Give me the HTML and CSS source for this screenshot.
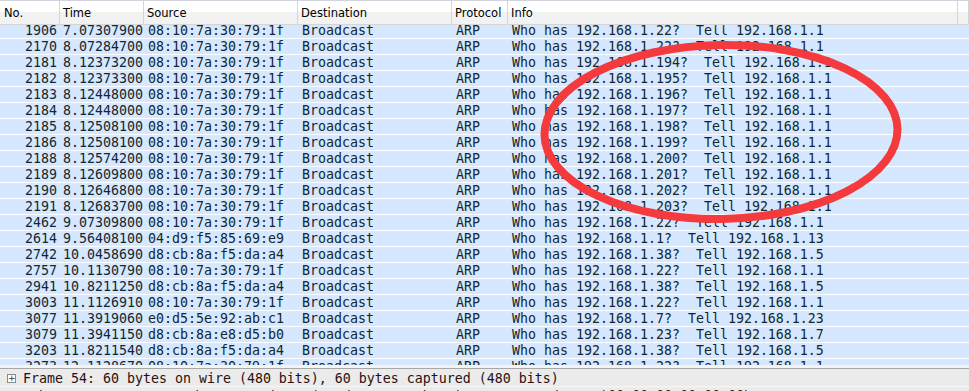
FILE: index.html
```html
<!DOCTYPE html>
<html lang="en">
  <head>
    <meta charset="UTF-8" />
    <title>Packet List</title>
    <link rel="stylesheet" href="styles.css">
  </head>
  <body>
    <div class="window">
      <div class="packet-header">
        <div class="col col-no">No.</div>
        <div class="col">Time</div>
        <div class="col">Source</div>
        <div class="col">Destination</div>
        <div class="col">Protocol</div>
        <div class="col">Info</div>
        <div class="col"></div>
      </div>

      <div class="packet-list">
        <div id="packet-rows" class="packet-rows"></div>
      </div>

      <div class="splitter"></div>

      <div class="details">
        <div class="detail-row">
          <span class="expander">+</span>
          <span class="detail-text">Frame 54: 60 bytes on wire (480 bits), 60 bytes captured (480 bits)</span>
        </div>
        <div class="detail-row">
          <span class="expander">+</span>
          <span class="detail-text">Ethernet II, Src: e0:d5:5e:92:ab:c1 (e0:d5:5e:92:ab:c1), Dst: Broadcast (ff:ff:ff:ff:ff:ff)</span>
        </div>
      </div>

      <svg class="marker" width="969" height="391" viewBox="0 0 969 391">
        <ellipse cx="721" cy="132" rx="176.5" ry="87" transform="rotate(-1 721 132)" />
      </svg>
    </div>

    <script>
      const rowList = document.getElementById("packet-rows");

      // no, time, source, who has, tell
      const packets = [
        ["1906", "7.07307900", "08:10:7a:30:79:1f", "192.168.1.22", "192.168.1.1"],
        ["2170", "8.07284700", "08:10:7a:30:79:1f", "192.168.1.22", "192.168.1.1"],
        ["2181", "8.12373200", "08:10:7a:30:79:1f", "192.168.1.194", "192.168.1.1"],
        ["2182", "8.12373300", "08:10:7a:30:79:1f", "192.168.1.195", "192.168.1.1"],
        ["2183", "8.12448000", "08:10:7a:30:79:1f", "192.168.1.196", "192.168.1.1"],
        ["2184", "8.12448000", "08:10:7a:30:79:1f", "192.168.1.197", "192.168.1.1"],
        ["2185", "8.12508100", "08:10:7a:30:79:1f", "192.168.1.198", "192.168.1.1"],
        ["2186", "8.12508100", "08:10:7a:30:79:1f", "192.168.1.199", "192.168.1.1"],
        ["2188", "8.12574200", "08:10:7a:30:79:1f", "192.168.1.200", "192.168.1.1"],
        ["2189", "8.12609800", "08:10:7a:30:79:1f", "192.168.1.201", "192.168.1.1"],
        ["2190", "8.12646800", "08:10:7a:30:79:1f", "192.168.1.202", "192.168.1.1"],
        ["2191", "8.12683700", "08:10:7a:30:79:1f", "192.168.1.203", "192.168.1.1"],
        ["2462", "9.07309800", "08:10:7a:30:79:1f", "192.168.1.22", "192.168.1.1"],
        ["2614", "9.56408100", "04:d9:f5:85:69:e9", "192.168.1.1", "192.168.1.13"],
        ["2742", "10.0458690", "d8:cb:8a:f5:da:a4", "192.168.1.38", "192.168.1.5"],
        ["2757", "10.1130790", "08:10:7a:30:79:1f", "192.168.1.22", "192.168.1.1"],
        ["2941", "10.8211250", "d8:cb:8a:f5:da:a4", "192.168.1.38", "192.168.1.5"],
        ["3003", "11.1126910", "08:10:7a:30:79:1f", "192.168.1.22", "192.168.1.1"],
        ["3077", "11.3919060", "e0:d5:5e:92:ab:c1", "192.168.1.7", "192.168.1.23"],
        ["3079", "11.3941150", "d8:cb:8a:e8:d5:b0", "192.168.1.23", "192.168.1.7"],
        ["3203", "11.8211540", "d8:cb:8a:f5:da:a4", "192.168.1.38", "192.168.1.5"],
        ["3273", "12.1128670", "08:10:7a:30:79:1f", "192.168.1.22", "192.168.1.1"],
      ];

      function displayPacket(packet) {
        const row = document.createElement("div");
        row.classList.add("packet-row");

        const cells = [
          packet[0],
          packet[1],
          packet[2],
          "Broadcast",
          "ARP",
          `Who has ${packet[3]}?  Tell ${packet[4]}`,
          "",
        ];

        cells.forEach((text, i) => {
          const cell = document.createElement("div");
          cell.classList.add("col");
          if (i === 0) cell.classList.add("col-no");
          cell.textContent = text;
          row.appendChild(cell);
        });

        rowList.appendChild(row);
      }

      packets.forEach((packet) => displayPacket(packet));
    </script>
  </body>
</html>
```

FILE: styles.css
```css
body {
  margin: 0;
  padding: 0;
  background: #fff;
}

.window {
  position: relative;
  width: 969px;
  height: 391px;
  overflow: hidden;
}

.packet-header,
.packet-row {
  display: grid;
  grid-template-columns: 60px 84px 154px 154px 56px 450px 1fr;
}

.packet-header {
  height: 23px;
  border-top: 1px solid #d3d3de;
  border-bottom: 1px solid #d5d5d5;
  background: linear-gradient(#fff 0, #fff 11px, #f2f2f2 11px, #f2f2f2 100%);
  font-family: "DejaVu Sans", sans-serif;
  font-size: 11.5px;
  color: #000;
  position: relative;
  z-index: 1;
}

.packet-header .col {
  border-right: 1px solid #d5d5d5;
  padding: 5px 0 0 3px;
  white-space: nowrap;
  overflow: hidden;
}

.packet-header .col-no {
  padding-left: 4px;
  border-right: 1px solid #d5d5d5;
}

.packet-list {
  height: 340px;
  overflow: hidden;
  background: #fff;
}

.packet-rows {
  margin-top: -2px;
}

.packet-row {
  height: 15px;
  border-bottom: 1px solid #fff;
  background: #d6e8ff;
  color: #12272e;
  font-family: "DejaVu Sans Mono", monospace;
  font-size: 13.29px;
  line-height: 15px;
}

.packet-row .col {
  padding-left: 4px;
  white-space: pre;
  overflow: hidden;
}

.packet-row .col:nth-child(2) {
  padding-left: 3px;
}

.packet-row .col-no {
  padding: 0 3px 0 0;
  text-align: right;
}

.splitter {
  height: 3px;
  background: #f4f4f4;
  border-bottom: 1px solid #a8a8a8;
}

.details {
  background: #ebebeb;
  height: 30px;
  font-family: "DejaVu Sans Mono", monospace;
  font-size: 13.29px;
  color: #2a1010;
}

.detail-row {
  display: flex;
  align-items: center;
  height: 16px;
  padding-top: 1px;
  border-bottom: 1px solid #f6f6f6;
  white-space: pre;
}

.expander {
  width: 7px;
  height: 7px;
  margin: 0 7px 0 7px;
  border: 1px solid #8a8a8a;
  background: #fff;
  color: #333;
  font-family: "DejaVu Sans", sans-serif;
  font-size: 9px;
  line-height: 7px;
  text-align: center;
  flex-shrink: 0;
}

.marker {
  position: absolute;
  top: 0;
  left: 0;
  pointer-events: none;
}

.marker ellipse {
  fill: none;
  stroke: #f43a3d;
  stroke-width: 8;
}
```
